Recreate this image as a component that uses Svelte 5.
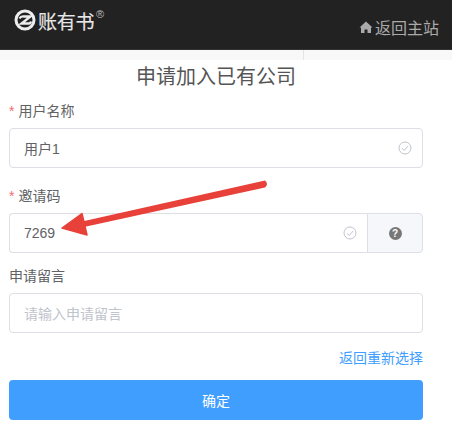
<script lang="ts">
	const checkPath = 'M4 7.2l2.2 2.2L10.2 5'
</script>

<div class="page">
	<header class="topbar">
		<div class="brand">
			<svg class="logo" viewBox="0 0 22 22" width="22" height="22">
				<circle cx="11" cy="11" r="9" fill="none" stroke="#eee" stroke-width="3" />
				<path d="M5.5 9.5Q7 7 10 7.5H16.5L7.5 14.5H15Q16.5 14.5 17 12.5" fill="none" stroke="#eee" stroke-width="2.4" />
			</svg>
			<span class="brand-name">账有书</span><sup class="reg">®</sup>
		</div>
		<a class="home" href="#home">
			<svg viewBox="0 0 14 12" width="14" height="12">
				<path d="M7 0.5L0.5 6.5H2V12H5.5V8.5H8.5V12H12V6.5H13.5Z" fill="#aaa" />
			</svg>
			<span>返回主站</span>
		</a>
	</header>
	<div class="strip"><span class="tick"></span></div>

	<main class="form">
		<h1>申请加入已有公司</h1>

		<div class="field">
			<div class="label"><i>*</i>用户名称</div>
			<div class="control">
				<div class="input">
					<span class="value">用户1</span>
					<svg class="check" viewBox="0 0 14 14" width="14" height="14">
						<circle cx="7" cy="7" r="6" />
						<path d={checkPath} />
					</svg>
				</div>
			</div>
		</div>

		<div class="field tight">
			<div class="label"><i>*</i>邀请码</div>
			<div class="control">
				<div class="input joined">
					<span class="value">7269</span>
					<svg class="check" viewBox="0 0 14 14" width="14" height="14">
						<circle cx="7" cy="7" r="6" />
						<path d={checkPath} />
					</svg>
				</div>
				<div class="addon"><span class="help">?</span></div>
			</div>
		</div>

		<div class="field">
			<div class="label">申请留言</div>
			<div class="control">
				<div class="input">
					<span class="placeholder">请输入申请留言</span>
				</div>
			</div>
		</div>

		<div class="back"><a href="#back">返回重新选择</a></div>
		<button type="button">确定</button>
	</main>

	<svg class="arrow" viewBox="0 0 452 432" width="452" height="432">
		<path d="M265 180.5Q269 184 265 187.5L84 227L82 221.5Z" fill="#e8413a" />
		<path d="M62 228L82 213.5L87 235Z" fill="#e8413a" stroke="#e8413a" stroke-width="1.5" stroke-linejoin="round" />
	</svg>
</div>

<style>
	:global(body) {
		margin: 0;
		background: #fff;
	}

	.page {
		position: relative;
		width: 452px;
		height: 432px;
		overflow: hidden;
		font-family: 'Liberation Sans', 'Noto Sans CJK SC', sans-serif;
		color: #606266;
	}

	.topbar {
		height: 50px;
		background: #222;
		display: flex;
		align-items: center;
		justify-content: space-between;
		padding: 0 13px 0 14px;
		box-sizing: border-box;
		border-bottom: 1px solid #333;
	}

	.brand {
		display: flex;
		align-items: center;
		color: #e8e8e8;
		margin-bottom: 9px;
	}

	.logo {
		margin-right: 2px;
	}

	.brand-name {
		font-size: 19px;
		letter-spacing: -0.3px;
		-webkit-text-stroke: 0.15px #e8e8e8;
	}

	.reg {
		font-size: 11px;
		align-self: flex-start;
		margin: 0 0 0 2px;
		line-height: 14px;
		color: #bbb;
	}

	.home {
		display: flex;
		align-items: center;
		color: #aaa;
		font-size: 16px;
		text-decoration: none;
		margin-top: 4px;
		gap: 2px;
	}

	.strip {
		height: 10px;
		background: #f8f8f8;
		display: flex;
		padding-left: 303px;
	}

	.tick {
		width: 1px;
		height: 100%;
		background: #e4e4e4;
	}

	.form {
		padding: 0 29px 0 9px;
	}

	h1 {
		margin: 0;
		height: 34px;
		font-size: 20px;
		font-weight: 400;
		line-height: 34px;
		text-align: center;
		color: #555;
	}

	.field {
		margin-bottom: 11px;
	}

	.tight {
		margin-bottom: 6px;
	}

	.label {
		height: 34px;
		line-height: 34px;
		font-size: 14px;
	}

	.label i {
		color: #f56c6c;
		font-style: normal;
		margin-right: 4px;
	}

	.control {
		display: flex;
		height: 40px;
	}

	.input {
		flex: 1;
		display: flex;
		align-items: center;
		justify-content: space-between;
		box-sizing: border-box;
		border: 1px solid #dcdfe6;
		border-radius: 4px;
		padding: 0 10px 0 14px;
		font-size: 14px;
	}

	.joined {
		border-radius: 4px 0 0 4px;
		border-right: 0;
	}

	.placeholder {
		color: #c0c4cc;
	}

	.check {
		fill: none;
		stroke: #c0c4cc;
		stroke-width: 1;
	}

	.addon {
		width: 56px;
		box-sizing: border-box;
		display: flex;
		align-items: center;
		justify-content: center;
		background: #f5f7fa;
		border: 1px solid #dcdfe6;
		border-radius: 0 4px 4px 0;
	}

	.help {
		width: 13px;
		height: 13px;
		border-radius: 50%;
		background: #777;
		color: #fff;
		font-size: 10px;
		font-weight: 700;
		line-height: 13px;
		text-align: center;
	}

	.back {
		text-align: right;
		font-size: 14px;
		line-height: 20px;
		margin-top: 15px;
	}

	.back a {
		color: #409eff;
		text-decoration: none;
	}

	button {
		display: block;
		width: 100%;
		height: 40px;
		margin-top: 12px;
		border: 0;
		border-radius: 4px;
		background: #409eff;
		color: #fff;
		font-family: inherit;
		font-size: 14px;
	}

	.arrow {
		position: absolute;
		left: 0;
		top: 0;
		pointer-events: none;
	}
</style>
